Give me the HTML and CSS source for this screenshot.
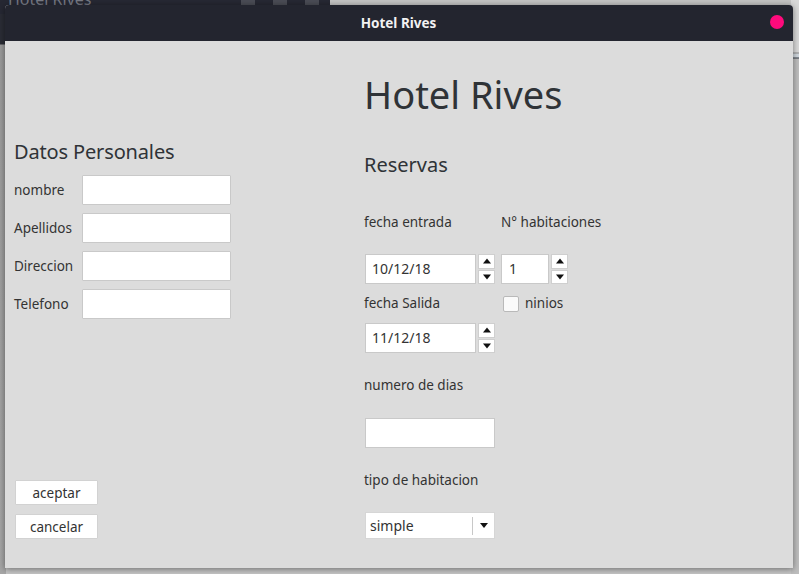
FILE: index.html
```html
<!DOCTYPE html>
<html lang="es">
<head>
<meta charset="utf-8">
<title>Hotel Rives</title>
<link rel="stylesheet" href="styles.css">
</head>
<body>
<div class="desktop">
  <div class="bg-topbar">
    <span class="bg-title">Hotel Rives</span>
    <span class="bg-btn b1"></span>
    <span class="bg-btn b2"></span>
    <span class="bg-btn b3"></span>
  </div>
  <div class="bg-left"></div>
  <div class="bg-right"></div>

  <div class="window">
    <div class="titlebar">
      <span class="title">Hotel Rives</span>
      <span class="close"></span>
    </div>
    <div class="content">
      <div class="left">
        <h2 class="section">Datos Personales</h2>
        <div class="fields">
          <div class="row"><span class="lbl">nombre</span><input class="field" type="text"></div>
          <div class="row"><span class="lbl">Apellidos</span><input class="field" type="text"></div>
          <div class="row"><span class="lbl">Direccion</span><input class="field" type="text"></div>
          <div class="row"><span class="lbl">Telefono</span><input class="field" type="text"></div>
        </div>
        <div class="buttons">
          <button class="btn">aceptar</button>
          <button class="btn">cancelar</button>
        </div>
      </div>
      <div class="right">
        <h1 class="hotel">Hotel Rives</h1>
        <h2 class="section reservas">Reservas</h2>
        <div class="pair r1">
          <span class="txt c1">fecha entrada</span>
          <span class="txt">N° habitaciones</span>
        </div>
        <div class="pair r2">
          <div class="spin c1">
            <div class="spin-box date">10/12/18</div>
            <div class="spin-btns"><span class="up"></span><span class="down"></span></div>
          </div>
          <div class="spin">
            <div class="spin-box num">1</div>
            <div class="spin-btns"><span class="up"></span><span class="down"></span></div>
          </div>
        </div>
        <div class="pair r3">
          <span class="txt c1">fecha Salida</span>
          <label class="check"><span class="box"></span><span class="txt">ninios</span></label>
        </div>
        <div class="pair r4">
          <div class="spin c1">
            <div class="spin-box date">11/12/18</div>
            <div class="spin-btns"><span class="up"></span><span class="down"></span></div>
          </div>
        </div>
        <div class="txt r5">numero de dias</div>
        <div class="plain r6"></div>
        <div class="txt r7">tipo de habitacion</div>
        <div class="select r8">
          <span class="sel-text">simple</span>
          <span class="sel-sep"></span>
          <span class="sel-arrow"></span>
        </div>
      </div>
    </div>
  </div>
</div>
</body>
</html>
```

FILE: styles.css
```css
* { box-sizing: border-box; }

html, body {
  margin: 0;
  padding: 0;
}

body {
  width: 799px;
  height: 574px;
  overflow: hidden;
  background: #c4c4c4;
  font-family: "Noto Sans", "Open Sans", sans-serif;
  color: #333333;
}

.desktop {
  position: relative;
  width: 799px;
  height: 574px;
}

.bg-topbar {
  position: absolute;
  left: 0;
  top: 0;
  width: 330px;
  height: 14px;
  background: #262833;
}
.bg-title {
  position: absolute;
  left: 8px;
  top: -10px;
  font-size: 16px;
  line-height: 18px;
  color: #777a85;
}
.bg-btn {
  position: absolute;
  top: 0;
  width: 14px;
  height: 5px;
  background: #4a4c55;
}
.b1 { left: 241px; }
.b2 { left: 273px; }
.b3 { left: 305px; }

.bg-left {
  position: absolute;
  left: 0;
  top: 14px;
  width: 6px;
  height: 560px;
  background: linear-gradient(#2a2c35 0, #2a2c35 30px, #9a9a9a 31px, #a6a6a6 100%);
}
.bg-right {
  position: absolute;
  right: 0;
  top: 0;
  width: 8px;
  height: 574px;
  background: linear-gradient(#d8d8d8 0, #d8d8d8 52px, #8a8a8a 53px, #cfd6dc 54px, #cfd6dc 57px, #333a44 58px, #bdbdbd 59px, #bdbdbd 100%);
}

.window {
  position: absolute;
  left: 5px;
  top: 5px;
  width: 788px;
  height: 563px;
  background: #dcdcdc;
  border-radius: 4px 4px 0 0;
  box-shadow: 0 1px 6px rgba(0, 0, 0, 0.45);
  display: flex;
  flex-direction: column;
  overflow: hidden;
}

.titlebar {
  height: 36px;
  flex: none;
  background: #23252f;
  display: flex;
  align-items: center;
  justify-content: center;
  position: relative;
}
.title {
  font-weight: bold;
  font-size: 13.5px;
  color: #f2f2f2;
  margin-left: -1px;
  margin-top: -1px;
}
.close {
  position: absolute;
  right: 9px;
  top: 10px;
  width: 14px;
  height: 14px;
  border-radius: 50%;
  background: #ff0a7c;
}

.content {
  flex: 1;
  display: flex;
  padding: 0 0 29px 9px;
}

.left {
  width: 351px;
  display: flex;
  flex-direction: column;
}

.section {
  margin: 0;
  font-size: 20px;
  line-height: 24px;
  font-weight: normal;
  color: #2f3337;
}
.left .section {
  margin-top: 99px;
  margin-bottom: 11px;
  letter-spacing: -0.15px;
}

.fields {
  display: flex;
  flex-direction: column;
  gap: 8px;
}
.row {
  display: flex;
  align-items: center;
  height: 30px;
}
.lbl {
  width: 68px;
  font-size: 13.5px;
  line-height: 18px;
}
.field {
  width: 149px;
  height: 30px;
  margin: 0;
  border: 1px solid #c9c9c9;
  background: #ffffff;
  border-radius: 1px;
  outline: none;
}

.buttons {
  margin-top: auto;
  display: flex;
  flex-direction: column;
  gap: 9px;
  padding-left: 1px;
}
.btn {
  width: 83px;
  height: 25px;
  margin: 0;
  padding: 0;
  border: 1px solid #d2d2d2;
  background: #ffffff;
  font-family: "Noto Sans", "Open Sans", sans-serif;
  font-size: 13.5px;
  color: #333;
  border-radius: 1px;
}

.right {
  display: flex;
  flex-direction: column;
  align-items: flex-start;
}

.hotel {
  margin: 30px 0 0 -1px;
  font-size: 38px;
  line-height: 46px;
  font-weight: normal;
  color: #2f3337;
}
.reservas {
  margin-top: 36px;
  margin-left: -1px;
}

.txt {
  font-size: 13.5px;
  line-height: 18px;
}
.right > .txt, .pair > .txt.c1 { margin-left: -1px; }
.pair > .txt.c1 { width: 137px; }

.pair {
  display: flex;
  align-items: flex-start;
}
.c1 { width: 136px; flex: none; }

.r1 { margin-top: 36px; }
.r2 { margin-top: 23px; }
.r3 { margin-top: 10px; }
.r4 { margin-top: 11px; }
.r5 { margin-top: 23px; }
.r6 { margin-top: 24px; }
.r7 { margin-top: 23px; }
.r8 { margin-top: 23px; }

.spin {
  display: flex;
  align-items: stretch;
  height: 30px;
  gap: 2px;
}
.spin-box {
  height: 30px;
  background: #fff;
  border: 1px solid #c9c9c9;
  font-size: 14px;
  line-height: 28px;
  padding-left: 6px;
  color: #333;
}
.spin-box.date { width: 111px; }
.spin-box.num { width: 48px; padding-left: 7px; }

.spin-btns {
  width: 17px;
  display: flex;
  flex-direction: column;
  gap: 1px;
}
.spin-btns span {
  flex: 1;
  background: #fff;
  border: 1px solid #cfcfcf;
  position: relative;
}
.spin-btns span::after {
  content: "";
  position: absolute;
  left: 50%;
  top: 50%;
  transform: translate(-50%, -50%);
  border-left: 4px solid transparent;
  border-right: 4px solid transparent;
}
.spin-btns .up::after { border-bottom: 5px solid #111; }
.spin-btns .down::after { border-top: 5px solid #111; }

.check {
  display: flex;
  align-items: center;
  gap: 6px;
  padding-left: 2px;
}
.box {
  width: 16px;
  height: 16px;
  background: #fafafa;
  border: 1px solid #b9b9b9;
  border-radius: 2px;
  margin-top: 2px;
}

.plain {
  width: 130px;
  height: 30px;
  background: #fff;
  border: 1px solid #c9c9c9;
}

.select {
  width: 130px;
  height: 27px;
  background: #fff;
  border: 1px solid #d6d6d6;
  display: flex;
  align-items: center;
  position: relative;
}
.sel-text {
  font-size: 14px;
  line-height: 18px;
  padding-left: 4px;
  flex: 1;
}
.sel-sep {
  width: 1px;
  height: 18px;
  background: #c8c8c8;
}
.sel-arrow {
  width: 21px;
  display: flex;
  justify-content: center;
}
.sel-arrow::after {
  content: "";
  border-left: 4px solid transparent;
  border-right: 4px solid transparent;
  border-top: 5px solid #111;
}
```
